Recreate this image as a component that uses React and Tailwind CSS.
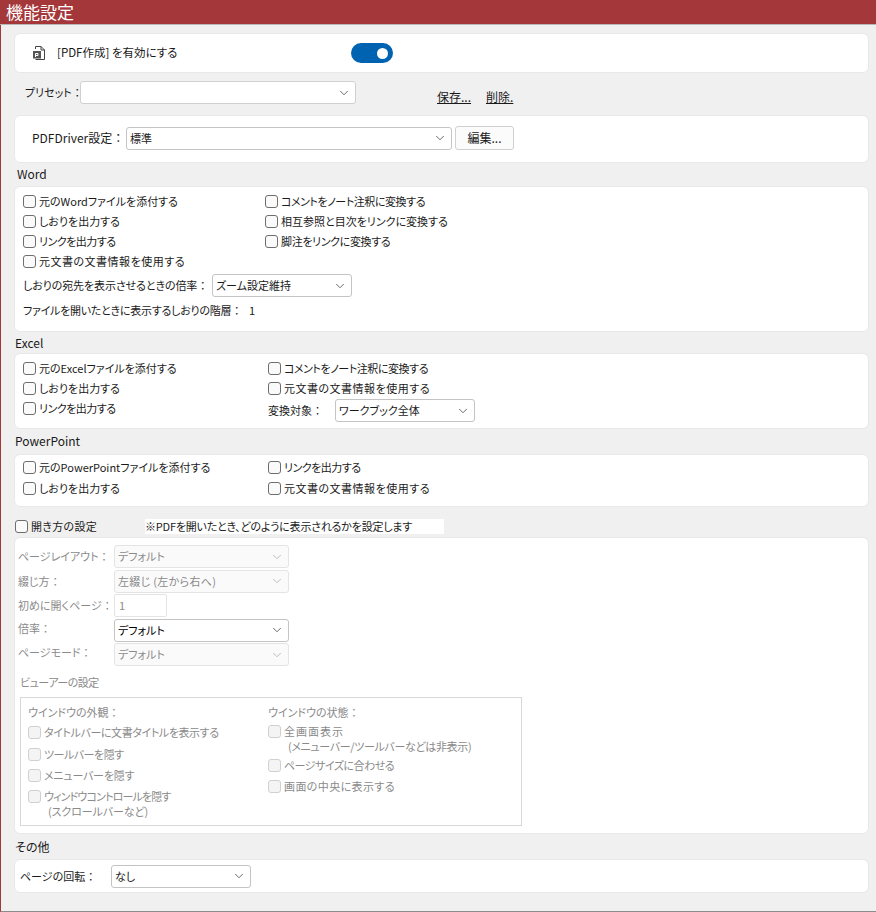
import { ChevronDown } from 'lucide-react';

function Select({ value, className = '', disabled, strong }) {
    return (
        <div className={`flex items-center justify-between rounded-[3px] border pl-[3px] pr-[4px] text-[11px] ${disabled ? 'border-[#e4e4e4] bg-[#fafafa] text-[#8a8a8a]' : 'border-[#c4c4c4] bg-white text-[#1a1a1a]'} ${strong ? 'text-black' : ''} ${className}`}>
            <span className="truncate">{value}</span>
            <ChevronDown className={`w-[14px] h-[14px] flex-shrink-0 ${disabled ? 'text-[#b4b4b4]' : 'text-[#555]'}`} strokeWidth={1.5} />
        </div>
    );
}

function Check({ label, sub, subClass = '', disabled, className = '' }) {
    return (
        <div className={`flex items-start gap-[3px] text-[11px] leading-[15px] whitespace-nowrap ${disabled ? 'text-[#8a8a8a]' : 'text-[#1a1a1a]'} ${className}`}>
            <span className={`mt-[1px] w-[13px] h-[13px] flex-shrink-0 rounded-[3px] border ${disabled ? 'border-[#d0d0d0] bg-[#f4f4f4]' : 'border-[#6e6e6e] bg-[#fafafa]'}`} />
            <span>
                {label}
                {sub && <span className={`block pl-[4px] ${subClass}`}>{sub}</span>}
            </span>
        </div>
    );
}

function Card({ className = '', children }) {
    return <div className={`ml-[13px] mr-[7px] rounded-[6px] border border-[#e8e8e8] bg-white ${className}`}>{children}</div>;
}

// full width colon, palt would squeeze it
function Colon() {
    return <span className="[font-feature-settings:normal]">：</span>;
}

function PdfIcon() {
    return (
        <svg className="w-[14px] h-[16px]" viewBox="0 0 14 16" fill="none" stroke="#444" strokeWidth="1">
            <path d="M3.5 4V1.5H9L12.5 5V14.5H3.5" />
            <path d="M9 1.5V5H12.5" />
            <rect x="1.5" y="6.5" width="7" height="6.5" fill="#555" stroke="#555" />
            <path d="M3.5 12V8.5H6V10.5H3.5" stroke="#fff" />
        </svg>
    );
}

export default function App() {
    return (
        <div className="w-[876px] h-[912px] overflow-hidden flex flex-col bg-[#f0f0f0] font-['Noto_Sans_CJK_JP','Noto_Sans',sans-serif] [font-feature-settings:'palt'] text-[11px] text-[#1a1a1a]">
            <div className="h-[25px] flex-shrink-0 border-b border-[#b8b8b8] bg-[#a4373a] pl-[6px] text-[17px] leading-[23px] text-white">機能設定</div>

            <div className="flex-1 border-l border-b border-l-[#a4373a] border-b-[#8c8c8c] pt-[8px] whitespace-nowrap">
                {/* Enable */}
                <Card className="h-[40px] flex items-center">
                    <div className="w-[18px] ml-[17px]"><PdfIcon /></div>
                    <span className="ml-[7px] w-[294px] text-[11.5px]">[PDF作成] を有効にする</span>
                    <span className="w-[42px] h-[20px] rounded-full bg-[#0063b1] flex items-center justify-end pr-[5px]">
                        <span className="w-[11px] h-[11px] rounded-full bg-white" />
                    </span>
                </Card>

                {/* Preset */}
                <div className="h-[42px] flex items-start pl-[24px] pt-[8px]">
                    <span className="w-[55px] leading-[22px]">プリセット<Colon /></span>
                    <Select value="" className="w-[276px] h-[23px] border-[#d0d0d0]" />
                    <span className="ml-[81px] mt-[8px] w-[36px] text-[12px] underline leading-[16px]">保存...</span>
                    <span className="ml-[13px] mt-[8px] text-[12px] underline leading-[16px]">削除.</span>
                </div>

                {/* Driver */}
                <Card className="h-[48px] flex items-center pl-[17px]">
                    <span className="w-[94px] -mt-[2px] text-[12px]">PDFDriver設定<Colon /></span>
                    <Select value="標準" className="w-[326px] h-[23px] -mt-[2px]" />
                    <button className="ml-[3px] w-[59px] h-[24px] -mt-[2px] rounded-[3px] border border-[#d0d0d0] bg-[#fbfbfb] text-[12px]">編集...</button>
                </Card>

                {/* Word */}
                <div className="h-[23px] pl-[16px] pt-[2px] leading-[17px] text-[12px]">Word</div>
                <Card className="h-[146px] pl-[8px] pt-[7px]">
                    <div className="grid grid-cols-[242px_1fr] gap-y-[5px]">
                        <Check label="元のWordファイルを添付する" />
                        <Check label="コメントをノート注釈に変換する" className="tracking-[-0.45px]" />
                        <Check label="しおりを出力する" />
                        <Check label="相互参照と目次をリンクに変換する" />
                        <Check label="リンクを出力する" className="tracking-[-0.5px]" />
                        <Check label="脚注をリンクに変換する" className="tracking-[-0.35px]" />
                        <Check label="元文書の文書情報を使用する" className="tracking-[0.5px]" />
                    </div>
                    <div className="flex items-center mt-[5px]">
                        <span className="w-[189px] tracking-[-0.1px]">しおりの宛先を表示させるときの倍率<Colon /></span>
                        <Select value="ズーム設定維持" className="w-[140px] h-[23px]" />
                    </div>
                    <div className="flex items-center mt-[4px] leading-[18px]">
                        <span className="w-[226px] tracking-[-0.25px]">ファイルを開いたときに表示するしおりの階層<Colon /></span>
                        <span>1</span>
                    </div>
                </Card>

                {/* Excel */}
                <div className="h-[21px] pl-[14px] pt-[3px] leading-[16px] text-[12px]">Excel</div>
                <Card className="h-[76px] pl-[8px] pt-[7px]">
                    <div className="grid grid-cols-[245px_1fr] gap-y-[5px]">
                        <Check label="元のExcelファイルを添付する" />
                        <Check label="コメントをノート注釈に変換する" className="tracking-[-0.45px]" />
                        <Check label="しおりを出力する" />
                        <Check label="元文書の文書情報を使用する" className="tracking-[0.5px]" />
                        <Check label="リンクを出力する" className="tracking-[-0.5px]" />
                        <div className="flex items-center -mt-[2px]">
                            <span className="w-[67px]">変換対象<Colon /></span>
                            <Select value="ワークブック全体" className="w-[140px] h-[23px]" />
                        </div>
                    </div>
                </Card>

                {/* PowerPoint */}
                <div className="h-[25px] pl-[14px] pt-[4px] leading-[16px] text-[12px]">PowerPoint</div>
                <Card className="h-[53px] pl-[8px] pt-[5px]">
                    <div className="grid grid-cols-[245px_1fr] gap-y-[6px]">
                        <Check label="元のPowerPointファイルを添付する" />
                        <Check label="リンクを出力する" className="tracking-[-0.5px]" />
                        <Check label="しおりを出力する" />
                        <Check label="元文書の文書情報を使用する" className="tracking-[0.5px]" />
                    </div>
                </Card>

                {/* Open settings */}
                <div className="h-[30px] flex items-start pl-[14px] pt-[12px]">
                    <Check label="開き方の設定" className="w-[130px] tracking-[0.3px]" />
                    <span className="bg-white w-[299px] h-[15px] leading-[15px] tracking-[-0.2px]">※PDFを開いたとき、どのように表示されるかを設定します</span>
                </div>
                <Card className="h-[297px] pl-[3px] pt-[7px] text-[#8a8a8a]">
                    <div className="grid grid-cols-[96px_175px] gap-y-[1.5px] items-center">
                        <span>ページレイアウト<Colon /></span>
                        <Select disabled value="デフォルト" className="h-[23px]" />
                        <span>綴じ方<Colon /></span>
                        <Select disabled value="左綴じ (左から右へ)" className="h-[23px] tracking-[0.3px]" />
                        <span>初めに開くページ<Colon /></span>
                        <div className="w-[53px] h-[23px] rounded-[2px] border border-[#e4e4e4] bg-white pl-[4px] leading-[21px]">1</div>
                        <span className="-mt-[4px]">倍率<Colon /></span>
                        <Select strong value="デフォルト" className="h-[23px]" />
                        <span className="-mt-[4px]">ページモード<Colon /></span>
                        <Select disabled value="デフォルト" className="h-[23px]" />
                    </div>
                    <div className="mt-[8px] pl-[2px] leading-[17px] tracking-[-0.5px]">ビューアーの設定</div>
                    <div className="mt-[6px] w-[502px] h-[129px] ml-[2px] border border-[#d8d8d8] flex pl-[7px] pt-[7px]">
                        <div className="w-[240px]">
                            <div className="leading-[15px] mb-[5px]">ウインドウの外観<Colon /></div>
                            <Check disabled label="タイトルバーに文書タイトルを表示する" className="mb-[7px] tracking-[-0.4px]" />
                            <Check disabled label="ツールバーを隠す" className="mb-[6px] tracking-[-0.5px]" />
                            <Check disabled label="メニューバーを隠す" className="mb-[6px] tracking-[-0.2px]" />
                            <Check disabled label="ウィンドウコントロールを隠す" sub="(スクロールバーなど)" subClass="tracking-[-0.1px]" className="tracking-[-0.85px]" />
                        </div>
                        <div>
                            <div className="leading-[15px] mb-[4px]">ウインドウの状態<Colon /></div>
                            <Check disabled label="全画面表示" sub="(メニューバー/ツールバーなどは非表示)" subClass="tracking-[-0.35px]" className="mb-[4px] tracking-[1px]" />
                            <Check disabled label="ページサイズに合わせる" className="mb-[6px] tracking-[-0.5px]" />
                            <Check disabled label="画面の中央に表示する" className="tracking-[0.4px]" />
                        </div>
                    </div>
                </Card>

                {/* Other */}
                <div className="h-[25px] pl-[14px] pt-[5px] leading-[16px] text-[12px]">その他</div>
                <Card className="h-[34px] flex items-center pl-[5px]">
                    <span className="w-[91px]">ページの回転<Colon /></span>
                    <Select value="なし" className="w-[140px] h-[23px]" />
                </Card>
            </div>
        </div>
    );
}
